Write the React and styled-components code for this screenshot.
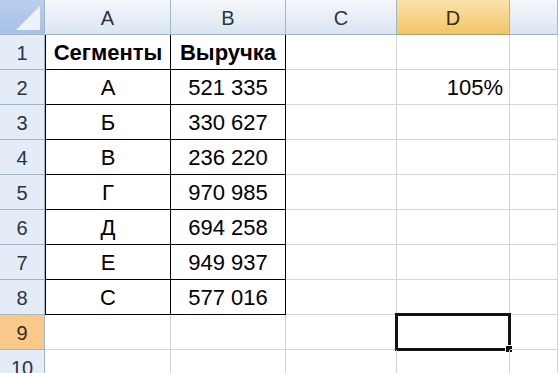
import React from "react";
import styled, { createGlobalStyle, css } from "styled-components";

const Global = createGlobalStyle`
  html, body { margin: 0; padding: 0; background: #ffffff; overflow: hidden; }
`;

const Sheet = styled.div`
  display: grid;
  grid-template-columns: 45px 126px 115px 111px 113px 1fr;
  grid-template-rows: 35px repeat(10, 35px);
  width: 558px;
  height: 373px;
  overflow: hidden;
  font-family: "Liberation Sans", Arial, sans-serif;
  color: #000;
`;

const Corner = styled.div`
  position: relative;
  background: linear-gradient(#b9cfec, #a6c0e6);
  border-right: 1px solid #9eb6ce;
  border-bottom: 1px solid #9eb6ce;
  box-sizing: border-box;
  &::after {
    content: "";
    position: absolute;
    right: 4px;
    bottom: 4px;
    width: 0;
    height: 0;
    border-left: 24px solid transparent;
    border-bottom: 24px solid #eef3fb;
  }
`;

const ColHead = styled.div`
  display: flex;
  align-items: center;
  justify-content: center;
  box-sizing: border-box;
  font-size: 20px;
  color: #2a3444;
  padding-top: 2px;
  border-right: 1px solid #9eb6ce;
  border-bottom: 1px solid #9eb6ce;
  background: linear-gradient(#f4f7fb, #dbe5f1);
  ${(p) =>
    p.$active &&
    css`
      background: linear-gradient(#fbe2ab, #f2c566);
      border-bottom-color: #c29a4f;
      color: #3a2a10;
    `}
`;

const RowHead = styled.div`
  display: flex;
  align-items: center;
  justify-content: center;
  box-sizing: border-box;
  font-size: 20px;
  color: #2a3444;
  padding-top: 2px;
  border-right: 1px solid #9eb6ce;
  border-bottom: 1px solid #9eb6ce;
  background: #e4ecf7;
  ${(p) =>
    p.$active &&
    css`
      background: #f8c98a;
      color: #3a2a10;
    `}
`;

const Cell = styled.div`
  position: relative;
  display: flex;
  align-items: center;
  justify-content: ${(p) => p.$align || "flex-start"};
  box-sizing: border-box;
  padding: 2px 6px 0;
  font-size: 22px;
  font-weight: ${(p) => (p.$bold ? 700 : 400)};
  border-right: 1px solid ${(p) => (p.$boxed ? "#000" : "#d4d4d4")};
  border-bottom: 1px solid ${(p) => (p.$boxed ? "#000" : "#d4d4d4")};
  border-left: ${(p) => (p.$leftEdge ? "1px solid #000" : "none")};
`;

const Selection = styled.div`
  position: absolute;
  left: -2px;
  top: -2px;
  right: -2px;
  bottom: -2px;
  border: 3px solid #111;
  pointer-events: none;
  &::after {
    content: "";
    position: absolute;
    right: -5px;
    bottom: -5px;
    width: 6px;
    height: 6px;
    background: #111;
    border: 1px solid #fff;
  }
`;

const columns = ["A", "B", "C", "D", ""];

const data = [
  ["Сегменты", "Выручка"],
  ["А", "521 335"],
  ["Б", "330 627"],
  ["В", "236 220"],
  ["Г", "970 985"],
  ["Д", "694 258"],
  ["Е", "949 937"],
  ["С", "577 016"],
];

const App = () => {
  const rows = Array.from({ length: 10 }, (_, i) => i + 1);
  return (
    <>
      <Global />
      <Sheet>
        <Corner />
        {columns.map((c, i) => (
          <ColHead key={i} $active={c === "D"}>
            {c}
          </ColHead>
        ))}
        {rows.map((r) => {
          const row = data[r - 1];
          return (
            <React.Fragment key={r}>
              <RowHead $active={r === 9}>{r}</RowHead>
              <Cell
                $boxed={!!row}
                $leftEdge={!!row}
                $bold={r === 1}
                $align="center"
              >
                {row ? row[0] : ""}
              </Cell>
              <Cell $boxed={!!row} $bold={r === 1} $align="center">
                {row ? row[1] : ""}
              </Cell>
              <Cell />
              <Cell $align="flex-end">
                {r === 2 ? "105%" : ""}
                {r === 9 && <Selection />}
              </Cell>
              <Cell />
            </React.Fragment>
          );
        })}
      </Sheet>
    </>
  );
};

export default App;
